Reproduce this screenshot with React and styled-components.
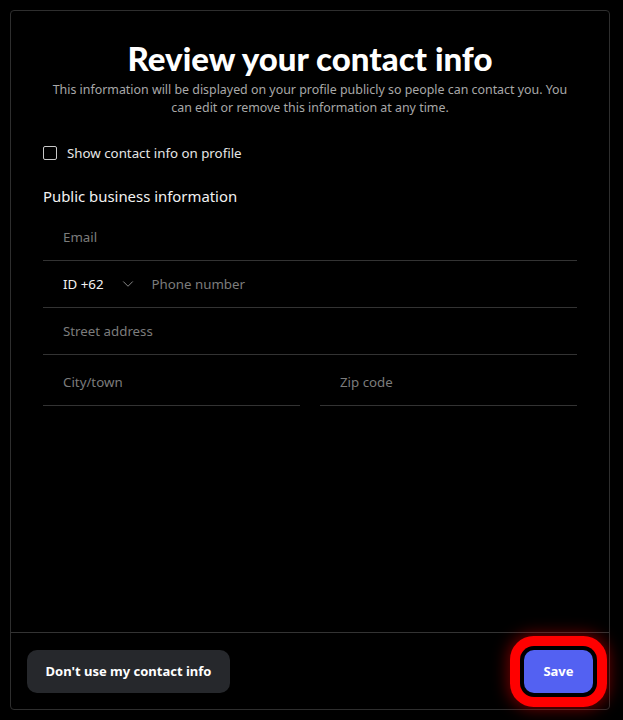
import React from 'react'
import styled, { createGlobalStyle } from 'styled-components'
import { ChevronDown } from 'lucide-react'

const GlobalStyle = createGlobalStyle`
  html, body {
    margin: 0;
    padding: 0;
    background: #000;
  }
  body {
    font-family: 'Noto Sans', 'Open Sans', sans-serif;
    color: #fff;
  }
`

const App = () => {
  return (
    <>
      <GlobalStyle />
      <Page>
        <Card>
          <Body>
            <Title>Review your contact info</Title>
            <Subtitle>
              This information will be displayed on your profile publicly so
              people can contact you. You can edit or remove this information
              at any time.
            </Subtitle>
            <CheckRow>
              <Box type="checkbox" />
              <span>Show contact info on profile</span>
            </CheckRow>
            <Heading>Public business information</Heading>
            <Field>
              <Input placeholder="Email" />
            </Field>
            <Field>
              <Country>
                ID +62
                <ChevronDown size={18} strokeWidth={1.3} color="#8a8a8a" />
              </Country>
              <Input placeholder="Phone number" $indent={1} />
            </Field>
            <Field>
              <Input placeholder="Street address" />
            </Field>
            <Pair>
              <Field>
                <Input placeholder="City/town" />
              </Field>
              <Field>
                <Input placeholder="Zip code" />
              </Field>
            </Pair>
          </Body>
          <Footer>
            <GhostBtn>Don't use my contact info</GhostBtn>
            <SaveBtn>Save</SaveBtn>
          </Footer>
        </Card>
      </Page>
    </>
  )
}

export default App

// <------------ css ------------> //

const Page = styled.div`
  padding: 10px;
  width: 623px;
  height: 720px;
  box-sizing: border-box;
`

const Card = styled.div`
  width: 600px;
  height: 700px;
  box-sizing: border-box;
  border: 1px solid #2e2e2e;
  border-radius: 4px;
  background: #000;
  display: flex;
  flex-direction: column;
`

const Body = styled.div`
  flex: 1;
  padding: 28px 32px 0 32px;
  display: flex;
  flex-direction: column;
`

const Title = styled.h1`
  margin: 0;
  font-family: Lato, 'Noto Sans', sans-serif;
  font-weight: 900;
  font-size: 33px;
  line-height: 38px;
  text-align: center;
  color: #fff;
`

const Subtitle = styled.p`
  margin: 4px 0 0;
  font-size: 12.4px;
  line-height: 18px;
  text-align: center;
  color: #a8a8a8;
`

const CheckRow = styled.label`
  margin-top: 26px;
  display: flex;
  align-items: center;
  gap: 10px;
  height: 20px;
  font-size: 13.3px;
  color: #e6e6e6;
`

const Box = styled.input`
  appearance: none;
  margin: 0;
  width: 14px;
  height: 14px;
  border: 1px solid #c8c8c8;
  border-radius: 2px;
  background: transparent;
`

const Heading = styled.div`
  margin: 23px 0 8px;
  font-size: 14.9px;
  line-height: 20px;
  color: #f2f2f2;
`

const Field = styled.div`
  height: 46px;
  display: flex;
  align-items: center;
  border-bottom: 1px solid #333;
`

const Pair = styled.div`
  display: grid;
  grid-template-columns: 1fr 1fr;
  gap: 20px;
  margin-top: 4px;
`

const Input = styled.input`
  flex: 1;
  min-width: 0;
  background: transparent;
  border: none;
  outline: none;
  padding: 0 0 0 ${p => (p.$indent ?? 20)}px;
  font-family: inherit;
  font-size: 13.3px;
  color: #fff;
  &::placeholder {
    color: #7c7c7c;
  }
`

const Country = styled.div`
  display: flex;
  align-items: center;
  gap: 15px;
  padding: 0 14px 0 20px;
  font-size: 13.3px;
  color: #f2f2f2;
`

const Footer = styled.div`
  height: 76px;
  border-top: 1px solid #333;
  display: flex;
  align-items: center;
  justify-content: space-between;
  padding: 0 16px;
`

const Btn = styled.button`
  height: 43px;
  border: none;
  border-radius: 10px;
  font-family: inherit;
  font-weight: 700;
  font-size: 13px;
  color: #fff;
  cursor: pointer;
`

const GhostBtn = styled(Btn)`
  width: 203px;
  background: #26282c;
`

const SaveBtn = styled(Btn)`
  width: 69px;
  background: #5361f2;
  box-shadow: 0 0 0 4px #000, 0 0 0 14px #ff0000,
    0 0 16px 16px rgba(255, 0, 0, 0.45);
`
